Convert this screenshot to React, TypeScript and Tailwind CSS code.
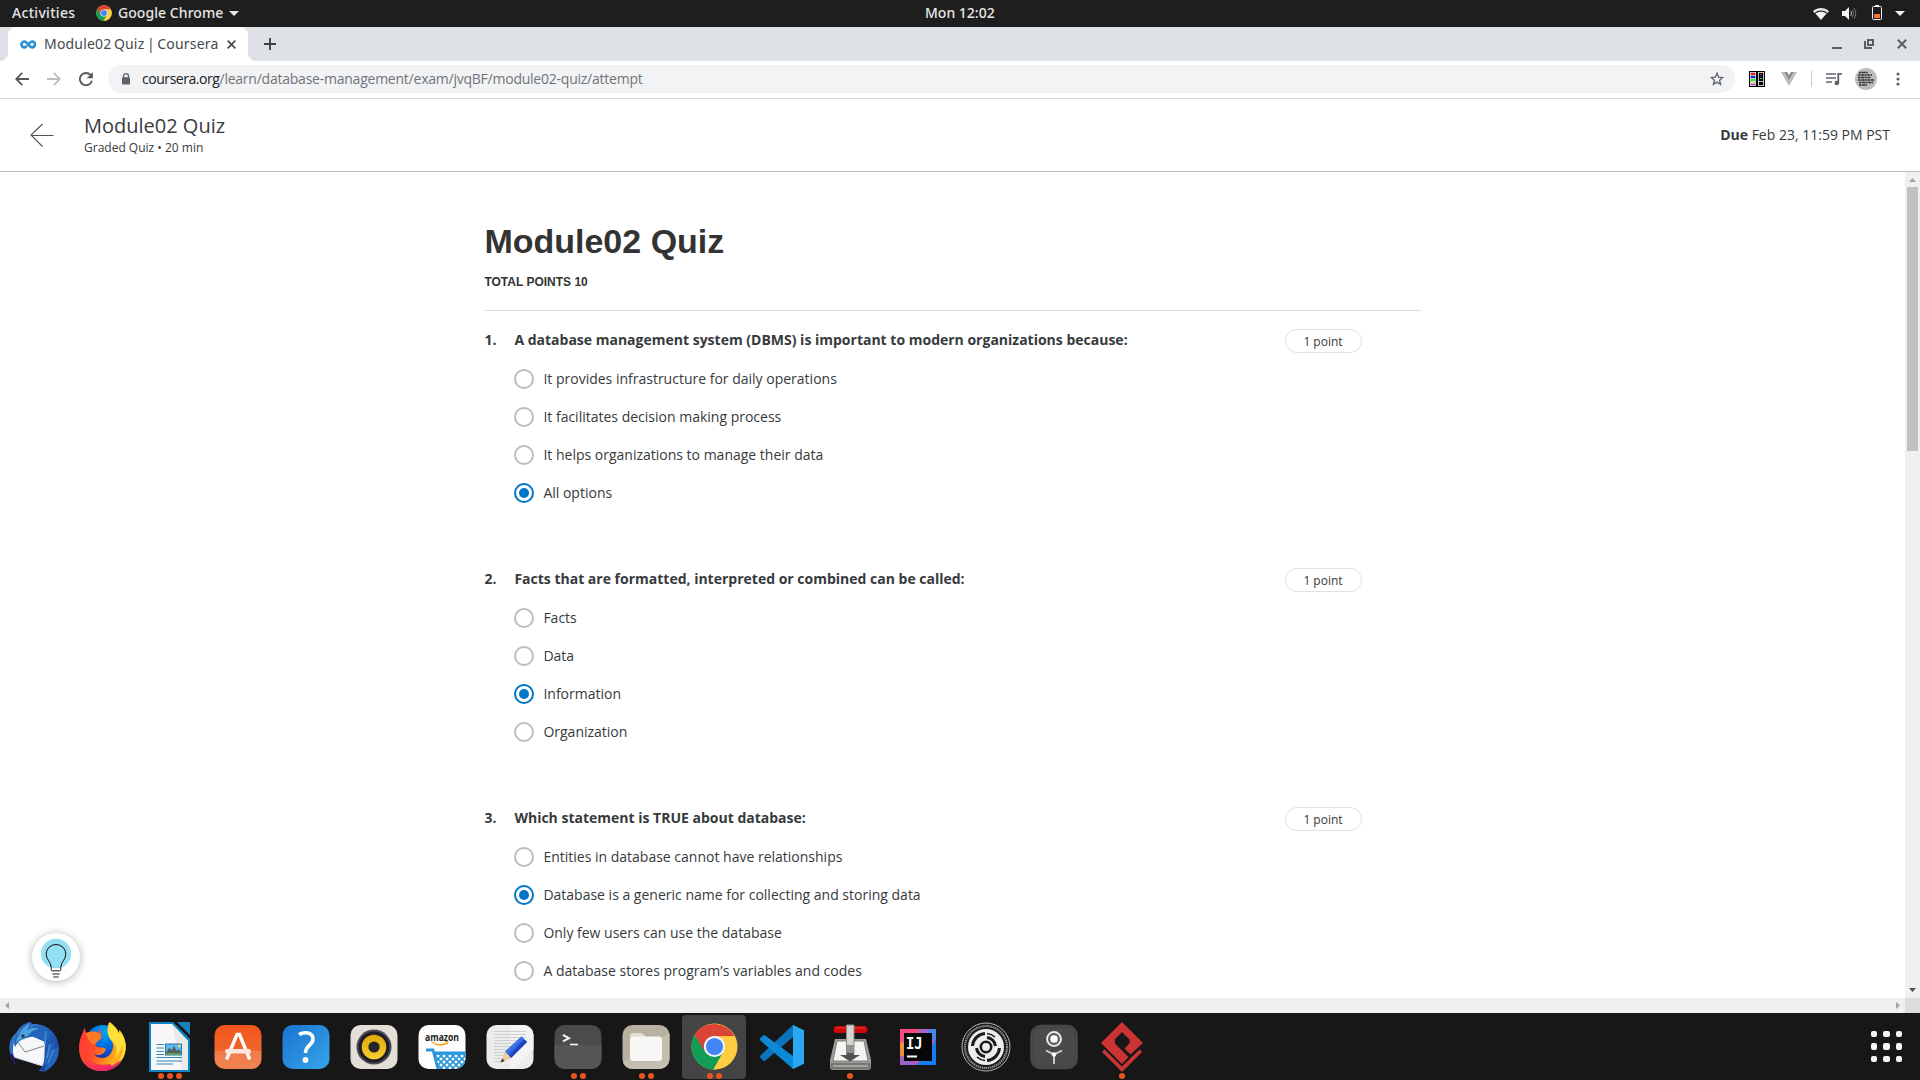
import type { ReactNode } from 'react';

type Question = { n: number; title: string; options: string[]; selected: number };

const questions: Question[] = [
  {
    n: 1,
    title: 'A database management system (DBMS) is important to modern organizations because:',
    options: [
      'It provides infrastructure for daily operations',
      'It facilitates decision making process',
      'It helps organizations to manage their data',
      'All options',
    ],
    selected: 3,
  },
  {
    n: 2,
    title: 'Facts that are formatted, interpreted or combined can be called:',
    options: ['Facts', 'Data', 'Information', 'Organization'],
    selected: 2,
  },
  {
    n: 3,
    title: 'Which statement is TRUE about database:',
    options: [
      'Entities in database cannot have relationships',
      'Database is a generic name for collecting and storing data',
      'Only few users can use the database',
      'A database stores program’s variables and codes',
    ],
    selected: 1,
  },
];

function ChromeLogo({ className }: { className: string }) {
  return (
    <svg viewBox="0 0 48 48" className={className}>
      <circle cx="24" cy="24" r="23.5" fill="#ffcd40" />
      <path d="M24 24 L13.5 29.5 L3.6 12.3 A23.5 23.5 0 0 1 44.4 13.5 L24 13.5Z" fill="#db4437" />
      <path d="M3.6 12.3 L14.5 29.5 L24 34.5 L32.8 29.8 L23 47.5 A23.5 23.5 0 0 1 3.6 12.3Z" fill="#0f9d58" />
      <path d="M44.4 13.5 H24 L32.8 29.8 L23 47.5 A23.5 23.5 0 0 0 44.4 13.5Z" fill="#ffcd40" />
      <circle cx="24" cy="24" r="10.8" fill="#f4f6f8" />
      <circle cx="24" cy="24" r="8.8" fill="#4285f4" />
    </svg>
  );
}

function TopBar() {
  return (
    <div className="relative flex h-[27px] items-center justify-between bg-[#1e1e1e] font-['Noto_Sans',sans-serif] text-[14px] leading-[25px] font-medium text-[#e6e6e6]">
      <div className="flex items-center pl-3">
        <span className="-mt-0.5 w-[84px] tracking-[0.3px]">Activities</span>
        <ChromeLogo className="-mt-px h-4 w-4" />
        <span className="-mt-0.5 ml-[6px] w-[107px] tracking-[0.06px] whitespace-nowrap">Google Chrome</span>
        <svg viewBox="0 0 10 5" className="ml-1 h-[5px] w-[10px]">
          <path d="M0 0H10L5 5Z" fill="#e6e6e6" />
        </svg>
      </div>
      <div className="absolute top-0 left-1/2 -ml-[35px] whitespace-nowrap">Mon 12:02</div>
      <div className="flex items-center pr-[15px]">
        <svg viewBox="0 0 16 12" className="h-3 w-4">
          <path d="M0 3.2C4.5-1 11.5-1 16 3.2L14.6 4.9C10.8 1.6 5.2 1.6 1.4 4.9Z" fill="#e6e6e6" />
          <path d="M2.4 5.6C5.7 3 10.3 3 13.6 5.6L8 12Z" fill="#f2f2f2" />
        </svg>
        <svg viewBox="0 0 15 13" className="ml-[13px] h-[13px] w-[15px]">
          <path d="M0 4H3L7 0V13L3 9H0Z" fill="#f2f2f2" />
          <path d="M8.8 4.2Q10.4 6.5 8.8 8.8" fill="none" stroke="#c8c8c8" />
          <path d="M10.3 2.6Q12.8 6.5 10.3 10.4M12 1.2Q15.6 6.5 12 11.8" fill="none" stroke="#777" />
        </svg>
        <svg viewBox="0 0 10 15" className="-mt-0.5 ml-[15px] h-[15px] w-[10px]">
          <path d="M3 0H7V2H3Z" fill="#f2f2f2" />
          <rect x=".5" y="1.5" width="9" height="13" rx="1" fill="none" stroke="#f2f2f2" />
          <rect x="2" y="9" width="6" height="4" fill="#f57537" />
        </svg>
        <svg viewBox="0 0 10 5" className="ml-[13px] h-[5px] w-[10px]">
          <path d="M0 0H10L5 5Z" fill="#f2f2f2" />
        </svg>
      </div>
    </div>
  );
}

function TabStrip() {
  return (
    <div className="flex h-[34px] items-end justify-between bg-[#dee1e6]">
      <div className="flex h-full items-center">
        <svg viewBox="0 0 8 8" className="h-2 w-2 self-end">
          <path d="M8 0V8H0A8 8 0 0 0 8 0Z" fill="#fff" />
        </svg>
        <div className="flex h-full w-60 items-center rounded-t-lg bg-white pl-3">
          <svg viewBox="0 0 16 9" className="h-[9px] w-4">
            <path
              d="M9.6 3.6C10.2 2.2 11 1.5 12 1.5A2.9 2.9 0 0 1 12 7.4C9.2 7.4 7.6 1.5 4.4 1.5A2.9 2.9 0 0 0 4.4 7.4C5.5 7.4 6.2 6.7 6.8 5.6"
              fill="none"
              stroke="#2a8fd0"
              strokeWidth="2.7"
            />
          </svg>
          <span className="ml-2 w-[175px] font-['Noto_Sans',sans-serif] text-[14px] leading-5 tracking-[0.18px] [word-spacing:-1.3px] whitespace-nowrap text-[#45494d]">
            Module02 Quiz | Coursera
          </span>
          <svg viewBox="0 0 9 9" className="ml-2 h-[9px] w-[9px]">
            <path d="M.7.7L8.3 8.3M8.3.7L.7 8.3" stroke="#45494d" strokeWidth="1.7" />
          </svg>
        </div>
        <svg viewBox="0 0 8 8" className="h-2 w-2 self-end">
          <path d="M0 0V8H8A8 8 0 0 1 0 0Z" fill="#fff" />
        </svg>
        <svg viewBox="0 0 12 12" className="ml-2 h-3 w-3">
          <path d="M6 0V12M0 6H12" stroke="#3c4043" strokeWidth="1.8" />
        </svg>
      </div>
      <div className="flex h-full items-center pr-[13px] text-[#5a5d61]">
        <svg viewBox="0 0 10 10" className="h-[10px] w-[10px]">
          <path d="M0 9H10" stroke="currentColor" strokeWidth="2" />
        </svg>
        <svg viewBox="0 0 10 10" className="ml-[22px] h-[10px] w-[10px]">
          <path d="M4 1H9V6H4ZM1 2V9H8" fill="none" stroke="currentColor" strokeWidth="2" />
        </svg>
        <svg viewBox="0 0 10 10" className="ml-[23px] h-[10px] w-[10px]">
          <path d="M.8.8L9.2 9.2M9.2.8L.8 9.2" stroke="currentColor" strokeWidth="2" />
        </svg>
      </div>
    </div>
  );
}

function Toolbar() {
  return (
    <div className="flex h-[38px] items-center border-b border-[#d9dadc] bg-white pb-px pl-[15px]">
      <svg viewBox="0 0 14 14" className="h-[14px] w-[14px]">
        <path d="M14 7H1.5M7.2.8L1.2 7L7.2 13.2" fill="none" stroke="#55585c" strokeWidth="1.8" />
      </svg>
      <svg viewBox="0 0 14 14" className="ml-[18px] h-[14px] w-[14px]">
        <path d="M0 7H12.5M6.8.8L12.8 7L6.8 13.2" fill="none" stroke="#bcbec0" strokeWidth="1.8" />
      </svg>
      <svg viewBox="0 0 14 14" className="ml-[18px] h-[14px] w-[14px]">
        <path d="M11.6 3.1A6.1 6.1 0 1 0 12.9 8.6" fill="none" stroke="#55585c" strokeWidth="1.8" />
        <path d="M13.9 0V6.2H7.7Z" fill="#55585c" />
      </svg>
      <div className="ml-[15px] flex h-7 w-[1627px] items-center rounded-full bg-[#f1f3f4] pr-[11px] pl-[13px]">
        <svg viewBox="0 0 10 12" className="h-3 w-[10px] shrink-0">
          <path d="M2.5 5V3.2A2.4 2.4 0 0 1 7.5 3.2V5" fill="none" stroke="#5f6368" strokeWidth="1.3" />
          <rect x="1" y="4.2" width="8" height="7.4" rx=".8" fill="#5f6368" />
        </svg>
        <span className="ml-[11px] font-['Open_Sans',sans-serif] text-[14px] leading-5 tracking-[-0.235px] whitespace-nowrap text-[#71757a]">
          <span className="tracking-[-0.45px] text-[#202124]">coursera.org</span>
          /learn/database-management/exam/jvqBF/module02-quiz/attempt
        </span>
        <svg viewBox="0 0 14 14" className="ml-auto h-[14px] w-[14px]">
          <path
            d="M7 1.3L8.6 5.1L12.8 5.5L9.6 8.2L10.6 12.3L7 10.1L3.4 12.3L4.4 8.2L1.2 5.5L5.4 5.1Z"
            fill="none"
            stroke="#5f6368"
            strokeWidth="1.3"
          />
        </svg>
      </div>
      <svg viewBox="0 0 16 16" className="ml-[14px] h-4 w-4" shapeRendering="crispEdges">
        <rect width="16" height="16" fill="#000" />
        <rect x="1" y="1" width="6" height="14" fill="#c4c4c4" />
        <rect x="9" y="1" width="6" height="14" fill="#c4c4c4" />
        <rect x="2" y="2" width="4" height="2" fill="#f11" />
        <rect x="2" y="5" width="4" height="2" fill="#12f" />
        <rect x="2" y="8" width="4" height="2" fill="#1f3" />
        <rect x="2" y="11" width="4" height="1" fill="#fe3" />
        <rect x="2" y="13" width="4" height="1" fill="#f0f" />
        <rect x="10" y="2" width="4" height="8" fill="#000" />
        <rect x="11" y="3" width="2" height="1" fill="#f11" />
        <rect x="11" y="5" width="2" height="1" fill="#12f" />
        <rect x="11" y="7" width="2" height="1" fill="#1f3" />
        <rect x="10" y="11" width="4" height="3" fill="#000" />
      </svg>
      <svg viewBox="0 0 16 14" className="ml-4 h-[14px] w-4">
        <path d="M0 0H3.2L8 8.4L12.8 0H16L8 14Z" fill="#bcbcbc" />
        <path d="M3.2 0H6.1L8 3.3L9.9 0H12.8L8 8.4Z" fill="#8a8a8a" />
      </svg>
      <div className="ml-[14px] h-4 w-px bg-[#c9cbce]" />
      <svg viewBox="0 0 16 14" className="ml-[14px] h-[14px] w-4">
        <path d="M0 2H10M0 6H10M0 10H6" stroke="#5f6368" strokeWidth="1.6" />
        <path d="M12.3 11V1.8H16" fill="none" stroke="#5f6368" strokeWidth="1.8" />
        <circle cx="10.8" cy="11" r="2.3" fill="#5f6368" />
      </svg>
      <svg viewBox="0 0 22 22" className="ml-[13px] h-[22px] w-[22px]">
        <circle cx="11" cy="11" r="11" fill="#bdbdbd" />
        <path
          d="M4 4.5H13M3 7H17M3 9.5H16M3 12H19M4 14.5H18M4 17H12"
          stroke="#2c2c2c"
          strokeWidth="1.5"
          strokeDasharray="2.6 .6 3.4 .5 1.6 .6"
        />
      </svg>
      <svg viewBox="0 0 4 14" className="ml-[19px] h-[14px] w-1">
        <circle cx="2" cy="2" r="1.6" fill="#5f6368" />
        <circle cx="2" cy="7" r="1.6" fill="#5f6368" />
        <circle cx="2" cy="12" r="1.6" fill="#5f6368" />
      </svg>
    </div>
  );
}

function QuizHeader() {
  return (
    <div className="flex h-[73px] items-center justify-between border-b border-[#bdbdbd] bg-white pr-[30px] pl-[30px] text-[#373a3c]">
      <div className="flex items-center">
        <svg viewBox="0 0 24 24" className="h-6 w-6">
          <path d="M23.5 12.5H1M12.5 1L1 12L12.5 23.5" fill="none" stroke="#525252" strokeWidth="1.1" />
        </svg>
        <div className="mt-0.5 ml-[30px]">
          <div className="text-[20px] leading-6">Module02 Quiz</div>
          <div className="text-[12px] leading-5">Graded Quiz • 20 min</div>
        </div>
      </div>
      <div className="text-[14px] leading-5">
        <span className="font-bold">Due</span> Feb 23, 11:59 PM PST
      </div>
    </div>
  );
}

function Radio({ checked }: { checked: boolean }) {
  return checked ? (
    <span className="flex h-5 w-5 shrink-0 items-center justify-center rounded-full border-2 border-[#0076c9] bg-white">
      <span className="h-[10px] w-[10px] rounded-full bg-[#0076c9]" />
    </span>
  ) : (
    <span className="h-5 w-5 shrink-0 rounded-full border-2 border-[#bdbdbd] bg-white" />
  );
}

function QuestionBlock({ q }: { q: Question }) {
  return (
    <div className="mb-14 flex text-[14px]">
      <div className="w-[30px] leading-[22px] font-bold">{q.n}.</div>
      <div className="flex-1">
        <div className="h-[31px] leading-[22px] font-bold">{q.title}</div>
        {q.options.map((option, i) => (
          <div key={option} className="flex h-[38px] items-center gap-[9px]">
            <Radio checked={i === q.selected} />
            <span className="leading-5">{option}</span>
          </div>
        ))}
      </div>
      <div className="mr-[59.4px] flex h-6 w-[77px] items-center justify-center rounded-full border border-[#e0e0e0] pt-0.5 pr-px text-[12px]">
        1 point
      </div>
    </div>
  );
}

function Bulb() {
  return (
    <div className="absolute bottom-[17px] left-8 h-12 w-12 rounded-full bg-white shadow-[0_1px_8px_rgba(0,0,0,0.3)]">
      <svg viewBox="0 0 48 48" className="h-12 w-12">
        <circle cx="24" cy="20.7" r="15" fill="#92def2" />
        <path d="M19 35.5H29V38H19Z" fill="#fff" />
        <path
          d="M19.2 36.5V34C18.8 28.5 14.2 27 14.2 20.8A9.8 9.3 0 0 1 33.8 20.8C33.8 27 29.2 28.5 28.8 34V36.5Q28.8 37.8 27.5 37.8H20.5Q19.2 37.8 19.2 36.5Z"
          fill="none"
          stroke="#111"
          strokeWidth="1"
        />
        <path d="M20.3 41H27.7M21.3 44H26.7" stroke="#222" strokeWidth="1" />
      </svg>
    </div>
  );
}

function VerticalScrollbar() {
  return (
    <div className="flex w-[15px] flex-col items-center bg-[#f0f0f0]">
      <svg viewBox="0 0 7 4" className="mt-[6px] h-1 w-[7px]">
        <path d="M0 4L3.5 0L7 4Z" fill="#a3a3a3" />
      </svg>
      <div className="mt-[5px] h-[264px] w-[11px] bg-[#c1c1c1]" />
      <svg viewBox="0 0 7 4" className="mt-auto mb-[6px] h-1 w-[7px]">
        <path d="M0 0H7L3.5 4Z" fill="#505050" />
      </svg>
    </div>
  );
}

function HorizontalScrollbar() {
  return (
    <div className="flex h-[15px] items-center bg-[#f0f0f0] pl-[5px]">
      <svg viewBox="0 0 4 7" className="h-[7px] w-1">
        <path d="M4 0V7L0 3.5Z" fill="#a3a3a3" />
      </svg>
      <svg viewBox="0 0 4 7" className="mr-[5px] ml-auto h-[7px] w-1">
        <path d="M0 0V7L4 3.5Z" fill="#a3a3a3" />
      </svg>
      <div className="h-full w-[15px] bg-[#dcdcdc]" />
    </div>
  );
}

const tile = { x: 8.5, y: 10, width: 47, height: 44, rx: 10 };

function Thunderbird() {
  return (
    <>
      <defs>
        <linearGradient id="tb" x1="0" y1="0" x2="1" y2="1">
          <stop offset="0" stopColor="#3f86d6" />
          <stop offset=".5" stopColor="#1f5fb8" />
          <stop offset="1" stopColor="#16398c" />
        </linearGradient>
      </defs>
      <path
        d="M28 7C22 8 17 13 14 18C8 23 6 31 8 38C9 44 12 48 14 50L34 54L40 57C52 52 58 42 57 31C55 17 44 8 30 9Z"
        fill="url(#tb)"
      />
      <path d="M8 38C9 45 13 50 19 52L24 51L11 40Z" fill="#2a0f66" />
      <path d="M12 43L41 51L37 55L26 53L14 50Z" fill="#171717" />
      <path d="M14 24C18 19 28 20 34 23L43 27L42 50L40 51L12 42C10 35 11 28 14 24Z" fill="#f6f7f9" />
      <path d="M15 26L23 37L42 31" fill="none" stroke="#777" strokeWidth=".9" />
      <path d="M12 42L41 51" stroke="#d4d6da" />
      <path d="M30 7C20 9 19 14 18 18C13 22 11 27 13 32C17 24 22 24 28 22C37 19 44 25 46 34L40 52L45 49L42 57C54 51 58 41 56 32L49 36L53 27L44 31L48 18C42 8 33 11 25 15Z" fill="#2563b8" />
      <path d="M28 8C20 12 19 16 17 20C15 23 14 25 14 28C19 23 23 23 27 20C29 16 34 14 38 14C33 12 29 13 25 15Z" fill="#4ba3e0" />
      <path d="M48 29L45 43M52 34L46 48M44 16L43 29" stroke="#3d8bd5" strokeWidth="1.6" fill="none" />
      <circle cx="21" cy="21" r="1.7" fill="#33333f" />
    </>
  );
}

function Firefox() {
  return (
    <>
      <defs>
        <linearGradient id="ffBody" x1="0" y1=".3" x2="1" y2=".7">
          <stop offset="0" stopColor="#ff3b3b" />
          <stop offset=".35" stopColor="#ff4a2a" />
          <stop offset=".7" stopColor="#ff9a1a" />
          <stop offset="1" stopColor="#ffc91f" />
        </linearGradient>
        <linearGradient id="ffBottom" x1="0" y1="0" x2=".6" y2="1">
          <stop offset="0" stopColor="#ff5a22" stopOpacity="0" />
          <stop offset="1" stopColor="#f0127c" />
        </linearGradient>
        <radialGradient id="ffGlobe" cx=".55" cy=".2" r=".85">
          <stop offset="0" stopColor="#00a7f5" />
          <stop offset=".55" stopColor="#0060df" />
          <stop offset="1" stopColor="#2d1d8f" />
        </radialGradient>
      </defs>
      <circle cx="33" cy="28" r="18" fill="url(#ffGlobe)" />
      <path
        d="M15 12C15 15 15.5 17 17 19C21 16 25 16 29 18C28 14 30 15 30 14L31.5 20L31 24C28 25 27 27 25 30C29 34 33 31 36 34C35 38 30 42 24 39C27 44 37 45 41 38C46 30 41 25 39 22C37 14 38 9 39.5 7C46 12 48 15 49 19L49.5 15C58 25 57 37 52 45C46 55 34 58 24 55C14 52 9 43 9 33C9 26 11 21 13 17Z"
        fill="url(#ffBody)"
      />
      <path d="M9 33C9 45 17 56 32 56C44 56 52 48 55 38C47 50 31 53 21 46C14 42 12 35 9 33Z" fill="url(#ffBottom)" />
      <path d="M39.5 7C46 12 48 15 49 19L49.5 15C57 25 57 35 53 43C50 47 46 48 43 47C48 41 48 32 43 27C37 22 36 14 39.5 7Z" fill="#fee03a" />
      <path d="M53 30C54 39 50 47 42 51L39 48C47 43 50 37 53 30Z" fill="#ffae1f" />
      <path d="M16 18C21 16 25 16 29 18L31 21C31 25 27 25 25 30C21 28 17 24 16 18Z" fill="#ff7a24" />
    </>
  );
}

function Writer() {
  return (
    <>
      <path d="M11 7H35L52 24V57H11Z" fill="#0e84c4" />
      <path d="M13 9H34L50 26V55H13Z" fill="#f7f7f7" />
      <path d="M34 9L50 26V55H44Z" fill="#e9e9e9" />
      <path d="M39 7H52V20Z" fill="#1782bd" />
      <path d="M18.5 29.5H26M18.5 33H26M18.5 36.5H26M18.5 39.5H26M18.5 42.5H44M18.5 46H44M18.5 49H35" stroke="#3187b5" strokeWidth="1.2" />
      <rect x="27.5" y="29" width="16" height="11" fill="#5eb8e8" stroke="#2379aa" />
      <path d="M28 38L31 33L34 35L36 31L39 36L41 34L43 38Z" fill="#555e62" />
      <path d="M28 38H43V39.5H28Z" fill="#6aa32f" />
      <circle cx="41.5" cy="31" r="1.3" fill="#ffe34a" />
    </>
  );
}

function SoftwareCenter() {
  return (
    <>
      <defs>
        <linearGradient id="sw" x1="0" y1="0" x2="0" y2="1">
          <stop offset="0" stopColor="#f2561d" />
          <stop offset="1" stopColor="#ee7038" />
        </linearGradient>
      </defs>
      <rect {...tile} fill="url(#sw)" />
      <path d="M8.5 36H55.5V44A10 10 0 0 1 45.5 54H18.5A10 10 0 0 1 8.5 44Z" fill="#fff" fillOpacity=".14" />
      <path d="M20.5 44.5L31 19.5H33.5L43.8 44.5" fill="none" stroke="#fff" strokeWidth="3.4" />
      <rect x="19" y="34" width="26" height="4.5" rx="2.2" fill="#ffe7dd" />
    </>
  );
}

function Help() {
  return (
    <>
      <defs>
        <linearGradient id="hp" x1="0" y1="0" x2="1" y2="1">
          <stop offset="0" stopColor="#1a73cf" />
          <stop offset="1" stopColor="#36a5ea" />
        </linearGradient>
      </defs>
      <rect {...tile} fill="url(#hp)" />
      <path d="M25 19.5C30 16.5 39 17 39 24C39 30.5 31.5 30 31.5 38" fill="none" stroke="#fff" strokeWidth="3.6" />
      <circle cx="31.5" cy="45" r="2.9" fill="#fff" />
    </>
  );
}

function Rhythmbox() {
  return (
    <>
      <defs>
        <linearGradient id="rb" x1="0" y1="0" x2="0" y2="1">
          <stop offset="0" stopColor="#dfa80a" />
          <stop offset="1" stopColor="#f9cf2c" />
        </linearGradient>
      </defs>
      <rect {...tile} fill="#e4dfd6" />
      <circle cx="32" cy="32" r="17.5" fill="#4a4b55" />
      <circle cx="32" cy="32" r="15.5" fill="#1d1e27" />
      <circle cx="32" cy="32" r="12.3" fill="url(#rb)" />
      <circle cx="32" cy="32" r="5.6" fill="#25262c" />
    </>
  );
}

function Amazon() {
  return (
    <>
      <defs>
        <clipPath id="amTile">
          <rect {...tile} />
        </clipPath>
        <clipPath id="amCart">
          <path d="M24 37.5H56V54H28Z" />
        </clipPath>
      </defs>
      <rect {...tile} fill="#fff" />
      <text x="15" y="25.5" fontFamily="Open Sans, sans-serif" fontSize="10.5" fontWeight="700" textLength="34" lengthAdjust="spacingAndGlyphs" fill="#222">
        amazon
      </text>
      <path d="M21.5 27Q29 32 37 28" fill="none" stroke="#f7a01d" strokeWidth="1.5" />
      <path d="M35 26.5L38 26.5L37.5 29.5" fill="none" stroke="#f7a01d" />
      <g clipPath="url(#amTile)" stroke="#2a96dd" fill="none">
        <path d="M16 35H23L28 54M23 38H56" strokeWidth="2.8" />
        <g clipPath="url(#amCart)" strokeWidth="1.7">
          <path d="M14 36L34 56M20 36L40 56M26 36L46 56M32 36L52 56M38 36L58 56M44 36L64 56M50 36L70 56" />
          <path d="M30 36L10 56M36 36L16 56M42 36L22 56M48 36L28 56M54 36L34 56M60 36L40 56M66 36L46 56M72 36L52 56" />
        </g>
      </g>
    </>
  );
}

function TextEditor() {
  return (
    <>
      <rect {...tile} fill="#ececec" />
      <path d="M32 10H45.5A10 10 0 0 1 55.5 20V34L36 54H32Z" fill="#f3f3f3" />
      <path d="M16 16.5H48M16 19.5H48M16 22.5H48M16 25.5H48M16 28.5H46M16 31.5H44M16 34.5H40M16 37.5H34M16 40.5H28M16 43.5H26M16 46.5H24" stroke="#cfcfcf" />
      <path d="M43.5 21.5L49 27L33 43L27 36.5Z" fill="#2b5fdb" />
      <path d="M43.5 21.5L45.5 23.5L29 39L27 36.5Z" fill="#3f74e8" />
      <path d="M46.5 24.5L49 27L33 43L31 41Z" fill="#1c46b8" />
      <path d="M27 36.5L33 43L23 47.5Z" fill="#f0c9a0" />
      <path d="M24.3 43.5L26.6 46L22.5 47.5Z" fill="#333" />
    </>
  );
}

function Terminal() {
  return (
    <>
      <rect {...tile} fill="#4b4b4b" />
      <path d="M8.5 30H55.5V44A10 10 0 0 1 45.5 54H18.5A10 10 0 0 1 8.5 44Z" fill="#555" />
      <path d="M17 20L23 23.2L17 26.4" fill="none" stroke="#f2f2f2" strokeWidth="2" />
      <path d="M24 29.5H32" stroke="#f2f2f2" strokeWidth="1.6" />
    </>
  );
}

function Files() {
  return (
    <>
      <rect {...tile} fill="#b8b1a1" />
      <path d="M55.5 18V44A10 10 0 0 1 45.5 54H18.5A10 10 0 0 1 9 47Z" fill="#c4beb0" />
      <path d="M16 21Q16 18 19 18H27Q29 18 30 20L32 22H44Q47 22 47 25V40H16Z" fill="#e3ddd0" />
      <rect x="16" y="21.5" width="32" height="24.5" rx="3.5" fill="#f8f7f5" />
    </>
  );
}

function VSCode() {
  return (
    <>
      <path d="M43 10L43 22L15.5 45.5Q14 46.5 12.5 45L10.5 43Q9.5 41.5 11 40Z" fill="#0b74bd" />
      <path d="M43 54L43 41L15.5 20.8Q14 19.8 12.5 21L10.5 23Q9.5 24.5 11 26Z" fill="#0c8ad6" />
      <path d="M43 10L54 15.2V48.8L43 54Z" fill="#2aa9f2" />
    </>
  );
}

function Transmission() {
  return (
    <>
      <path d="M17 24H48L53 45V52Q53 55 50 55H15Q12 55 12 52V45Z" fill="#9c9c98" />
      <path d="M12.5 48H52.5V52Q52.5 54.5 50 54.5H15Q12.5 54.5 12.5 52Z" fill="#777773" />
      <path d="M15 51H50" stroke="#a5a5a0" strokeWidth="2" />
      <path d="M19 26H46L50 46H15Z" fill="#f3f3f1" stroke="#6f6f6b" strokeWidth=".8" />
      <rect x="15.5" y="11" width="34" height="7" rx="3.5" fill="#cf0808" />
      <path d="M18 13H47" stroke="#e83a3a" strokeWidth="1" />
      <path d="M28.5 10H36V38H28.5Z" fill="#d3d3d0" stroke="#8b8b87" />
      <path d="M28.5 37H36V40H42L32.2 46.5L22 40H28.5Z" fill="#4e5253" />
      <path d="M28.5 30H36V38H28.5Z" fill="#8d908f" />
    </>
  );
}

function IntelliJ() {
  return (
    <>
      <rect x="14" y="14" width="36" height="36" fill="#c958b5" />
      <path d="M14 14H36L26 26L14 28Z" fill="#fb4a7d" />
      <path d="M36 14H50V26L40 24Z" fill="#4a86e8" />
      <path d="M34 14H44L40 20H30Z" fill="#a366cf" />
      <path d="M50 24V50H30L40 40Z" fill="#157df3" />
      <path d="M14 28L20 26V44L14 42Z" fill="#f0923c" />
      <path d="M14 40L22 44L32 50H14Z" fill="#9a62c4" />
      <rect x="18" y="18" width="28" height="28" fill="#070707" />
      <text x="20" y="34" fontFamily="DejaVu Sans Mono, monospace" fontSize="16" fontWeight="700" textLength="16.5" lengthAdjust="spacingAndGlyphs" fill="#fff">
        IJ
      </text>
      <path d="M21 41.5H31" stroke="#fff" strokeWidth="2" />
    </>
  );
}

function Rings() {
  return (
    <>
      <circle cx="32" cy="32" r="24" fill="#1b1b1b" stroke="#b5b5b5" strokeWidth="1" />
      <circle cx="32" cy="32" r="21" fill="none" stroke="#8f8f8f" strokeWidth="2.2" strokeDasharray="1.4 .7" />
      <circle cx="32" cy="32" r="18" fill="#ededed" />
      <path d="M18.5 31A13.5 13.5 0 0 1 31 18.5M45.5 33A13.5 13.5 0 0 1 33 45.5" fill="none" stroke="#1a1a1a" strokeWidth="3" />
      <path d="M33 22.5A9.5 9.5 0 0 1 41.5 31M31 41.5A9.5 9.5 0 0 1 22.5 33" fill="none" stroke="#1a1a1a" strokeWidth="3" />
      <path d="M33 18.5A13.5 13.5 0 0 1 41 22M31 45.5A13.5 13.5 0 0 1 23 42" fill="none" stroke="#1a1a1a" strokeWidth="1.5" />
      <circle cx="32" cy="32" r="5.2" fill="#ededed" stroke="#1a1a1a" strokeWidth="2.6" />
      <circle cx="32" cy="32" r="2.2" fill="#ededed" />
    </>
  );
}

function Keyhole() {
  return (
    <>
      <rect {...tile} fill="#4a4a4a" stroke="#3c3c3c" />
      <rect x="11" y="12.5" width="42" height="39" rx="7" fill="none" stroke="#424242" />
      <circle cx="32" cy="24" r="6.9" fill="none" stroke="#ececec" strokeWidth="2" />
      <circle cx="32" cy="24" r="4" fill="#fff" stroke="#ababab" />
      <path d="M24 35.5L32 39.5L40 35.5M32 39.5V49" fill="none" stroke="#d4d4d4" strokeWidth="1.8" />
      <circle cx="32" cy="39.5" r="2.2" fill="#fff" />
    </>
  );
}

function VisualParadigm() {
  return (
    <>
      <path d="M32 7L53 28L40.5 39.5L34.5 33.5L39.5 28.5V24.5L32 17L25 24V28.5L38.5 42L32 49L11 28Z" fill="#cc3333" />
      <path d="M12.5 36L14.5 34.5L32 51.5L49.5 34.5L51.5 36V37.5L32 57L12.5 37.5Z" fill="#cc3333" />
    </>
  );
}

const dockItems: { name: string; icon: ReactNode; windows: number; active?: boolean }[] = [
  { name: 'Thunderbird', icon: <Thunderbird />, windows: 0 },
  { name: 'Firefox', icon: <Firefox />, windows: 0 },
  { name: 'Writer', icon: <Writer />, windows: 3 },
  { name: 'Software', icon: <SoftwareCenter />, windows: 0 },
  { name: 'Help', icon: <Help />, windows: 0 },
  { name: 'Rhythmbox', icon: <Rhythmbox />, windows: 0 },
  { name: 'Amazon', icon: <Amazon />, windows: 0 },
  { name: 'Text Editor', icon: <TextEditor />, windows: 0 },
  { name: 'Terminal', icon: <Terminal />, windows: 2 },
  { name: 'Files', icon: <Files />, windows: 2 },
  { name: 'Chrome', icon: null, windows: 2, active: true },
  { name: 'VS Code', icon: <VSCode />, windows: 0 },
  { name: 'Transmission', icon: <Transmission />, windows: 1 },
  { name: 'IntelliJ', icon: <IntelliJ />, windows: 0 },
  { name: 'Rings', icon: <Rings />, windows: 0 },
  { name: 'Keyhole', icon: <Keyhole />, windows: 0 },
  { name: 'Visual Paradigm', icon: <VisualParadigm />, windows: 1 },
];

function Dock() {
  return (
    <div className="flex h-[67px] items-center justify-between bg-[#171717] pr-[18px] pl-0.5">
      <div className="flex gap-1">
        {dockItems.map((item) => (
          <div
            key={item.name}
            className={
              item.active
                ? 'relative flex h-16 w-16 items-center justify-center rounded bg-[#444444]'
                : 'relative flex h-16 w-16 items-center justify-center'
            }
          >
            {item.icon ? (
              <svg viewBox="0 0 64 64" className="h-16 w-16">
                {item.icon}
              </svg>
            ) : (
              <ChromeLogo className="h-[47px] w-[47px]" />
            )}
            <div className="absolute inset-x-0 bottom-0 flex justify-center gap-[3px]">
              {Array.from({ length: item.windows }, (_, i) => (
                <span key={i} className="h-1.5 w-1.5 rounded-full bg-[#e95420]" />
              ))}
            </div>
          </div>
        ))}
      </div>
      <div className="grid grid-cols-3 gap-[6px]">
        {Array.from({ length: 9 }, (_, i) => (
          <span key={i} className="h-[6.5px] w-[6.5px] rounded-[2px] bg-[#f5f5f5]" />
        ))}
      </div>
    </div>
  );
}

export default function App() {
  return (
    <div className="flex h-[1080px] w-[1920px] flex-col overflow-hidden bg-white font-['Open_Sans',sans-serif]">
      <TopBar />
      <TabStrip />
      <Toolbar />
      <QuizHeader />
      <div className="relative flex h-[826px]">
        <div className="min-w-0 flex-1 overflow-hidden pt-[49px] pl-[484.4px] text-[#373a3c]">
          <div className="w-[937px]">
            <h1 className="font-['Liberation_Sans',sans-serif] text-[34px] leading-10 font-bold text-[#333]">Module02 Quiz</h1>
            <div className="mt-[13px] font-['Liberation_Sans',sans-serif] text-[12px] leading-4 font-bold text-[#333]">
              TOTAL POINTS 10
            </div>
            <div className="mt-5 mb-[18px] h-px bg-[#dedede]" />
            {questions.map((q) => (
              <QuestionBlock key={q.n} q={q} />
            ))}
          </div>
        </div>
        <VerticalScrollbar />
        <Bulb />
      </div>
      <HorizontalScrollbar />
      <Dock />
    </div>
  );
}
